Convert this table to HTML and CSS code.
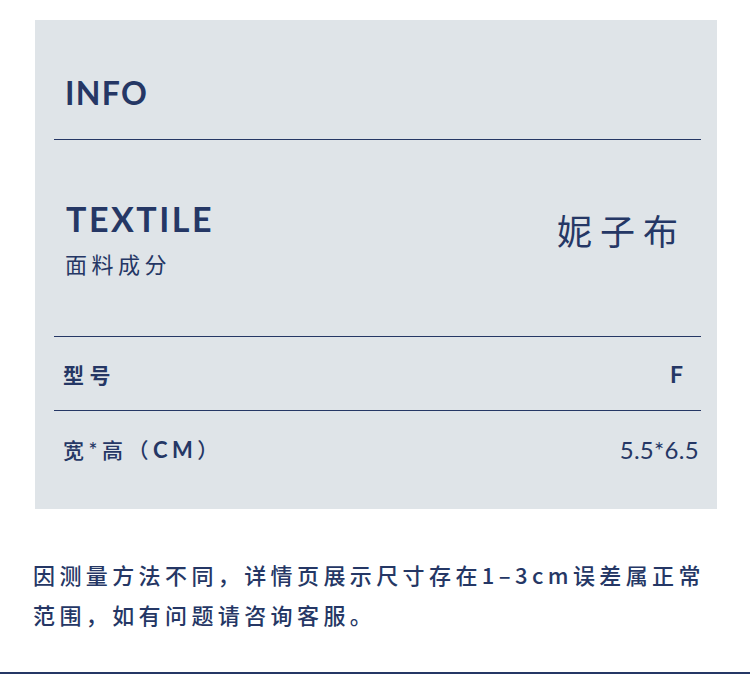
FILE: index.html
```html
<!DOCTYPE html>
<html lang="zh">
<head>
<meta charset="utf-8">
<link rel="stylesheet" href="styles.css">
</head>
<body>
<div class="card">
  <div class="head"><h1 class="title">INFO</h1></div>
  <div class="textile">
    <div class="tx-left">
      <div class="tx-en">TEXTILE</div>
      <div class="tx-cn">面料成分</div>
    </div>
    <div class="tx-val">妮子布</div>
  </div>
  <div class="row row-model">
    <span class="label">型号</span>
    <span class="val-bold">F</span>
  </div>
  <div class="row row-size">
    <span class="label label-size">宽*高（<span class="lat">CM</span>）</span>
    <span class="val">5.5*6.5</span>
  </div>
</div>
<p class="note">因测量方法不同，详情页展示尺寸存在1–3cm误差属正常范围，如有问题请咨询客服。</p>
<div class="rule"></div>
</body>
</html>
```
FILE: styles.css
```css
* { box-sizing: border-box; }
body {
  margin: 0;
  background: #fff;
  color: #253765;
  font-family: "Lato", "Noto Sans CJK SC", sans-serif;
}
.lat { font-family: "Lato", sans-serif; }
.card {
  margin: 20px 33px 0 35px;
  height: 489px;
  background: #dfe4e8;
  padding: 0 16px 0 19px;
}
.head {
  height: 120px;
  border-bottom: 1px solid #253765;
  padding: 0 0 0 11px;
  display: flex;
  align-items: flex-start;
}
.title {
  margin: 0;
  padding-top: 57px;
  font-size: 32px;
  font-weight: 700;
  letter-spacing: 1.3px;
  line-height: 1;
}
.textile {
  height: 197px;
  border-bottom: 1px solid #253765;
  display: flex;
  justify-content: space-between;
  align-items: flex-start;
  padding: 0 0 0 12px;
}
.tx-en {
  font-size: 34px;
  font-weight: 700;
  letter-spacing: 2.5px;
  line-height: 1;
  margin-top: 62px;
}
.tx-cn {
  font-size: 22px;
  letter-spacing: 4.5px;
  line-height: 1;
  margin-top: 18px;
  margin-left: -1px;
}
.tx-val {
  font-size: 35px;
  letter-spacing: 8px;
  line-height: 1;
  margin-top: 74px;
  margin-right: 15px;
}
.row {
  display: flex;
  justify-content: space-between;
  align-items: center;
  padding: 0 2px 0 9px;
}
.row-model {
  height: 74px;
  border-bottom: 1px solid #253765;
  padding-right: 18px;
}
.row-size {
  height: 76px;
}
.label {
  font-size: 21px;
  font-weight: 700;
  letter-spacing: 5.5px;
}
.label-size { font-weight: 500; letter-spacing: 4.5px; }
.label-size .lat { font-size: 22px; font-weight: 700; letter-spacing: 4.5px; }
.val-bold {
  font-size: 23px;
  font-weight: 700;
}
.val {
  font-size: 24px;
  font-weight: 400;
  letter-spacing: 0.3px;
}
.note {
  margin: 45px 30px 0 33px;
  font-family: "Noto Sans CJK SC", sans-serif;
  font-size: 22px;
  line-height: 40px;
  letter-spacing: 4.4px;
  font-weight: 500;
}
.rule {
  margin-top: 38px;
  height: 2px;
  background: #253765;
}
```
